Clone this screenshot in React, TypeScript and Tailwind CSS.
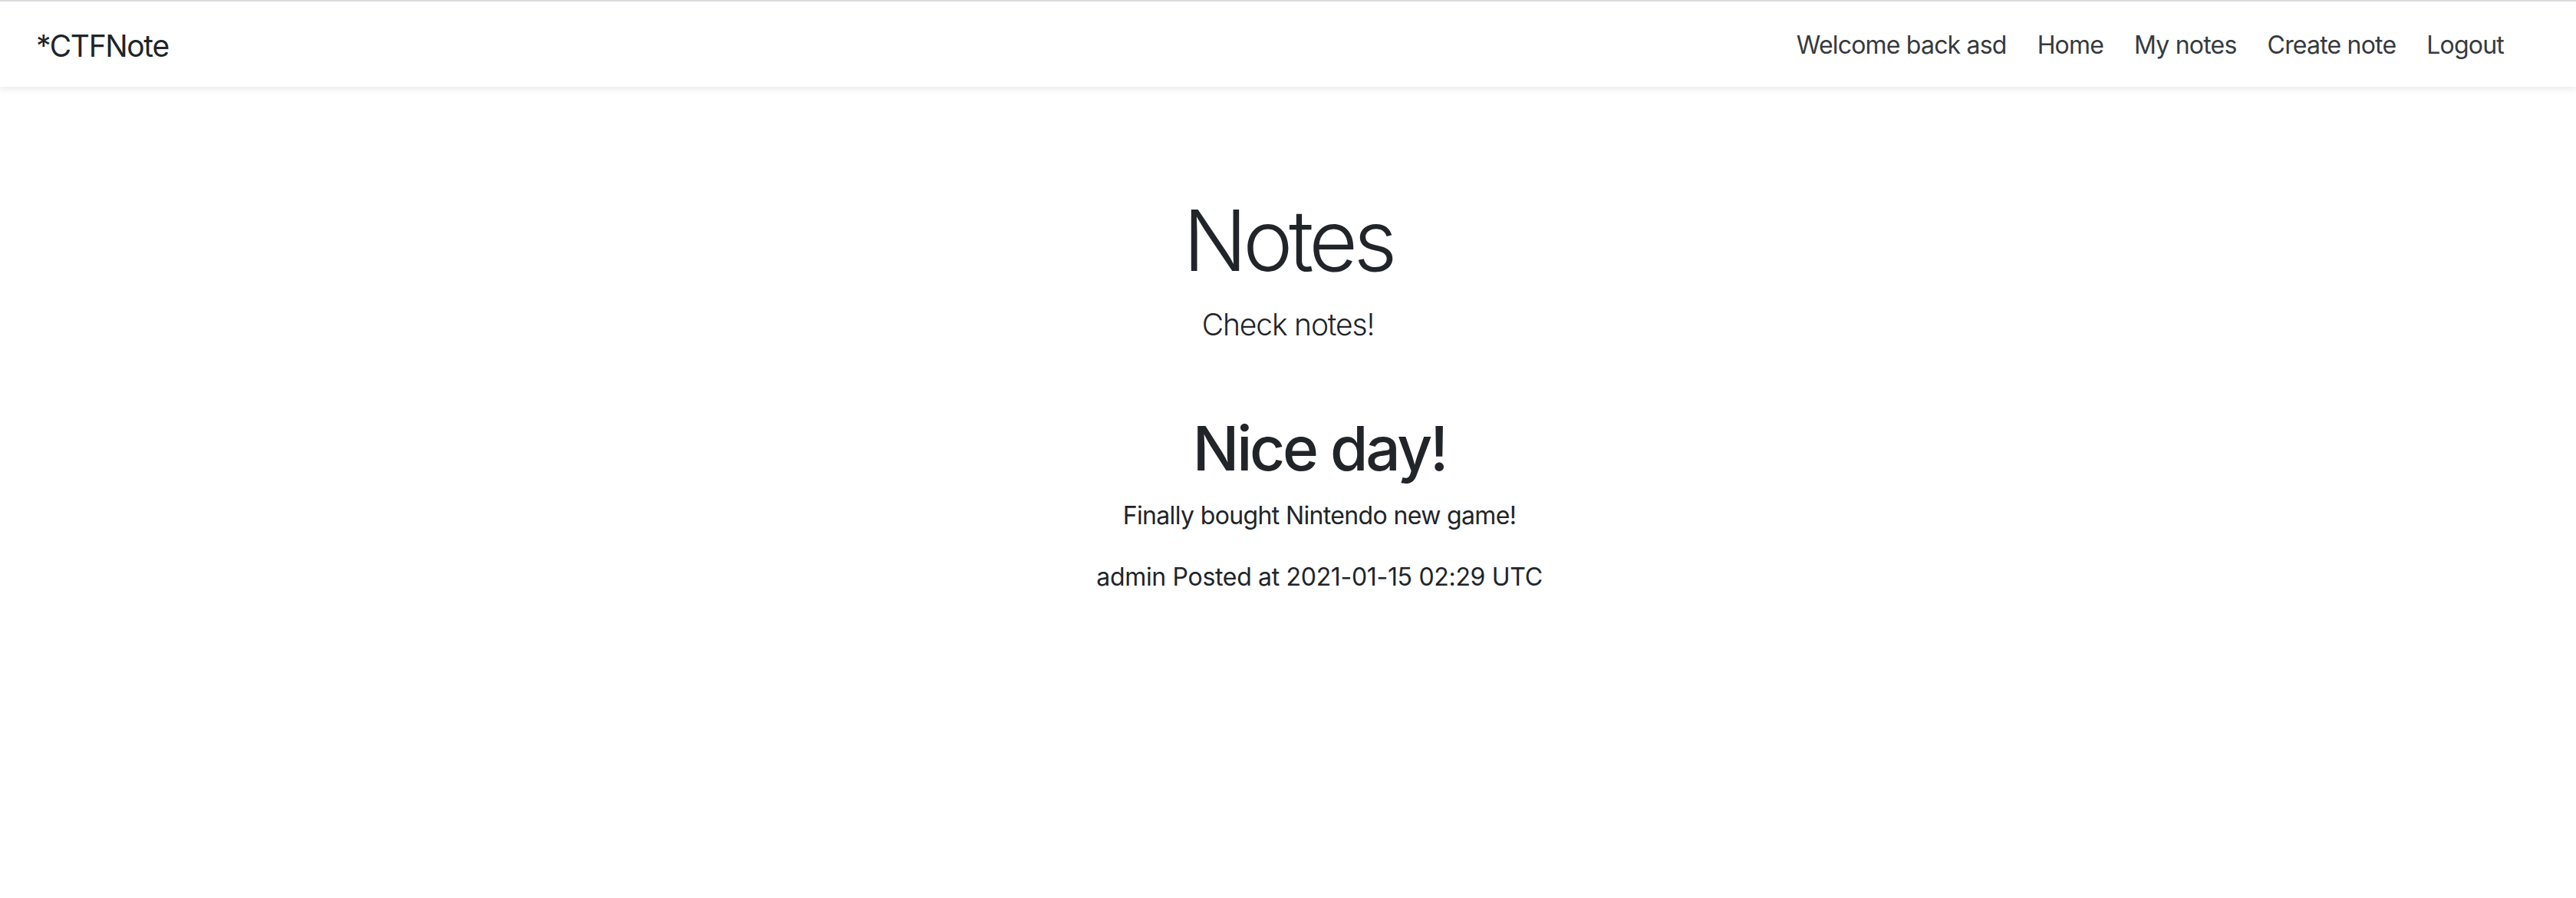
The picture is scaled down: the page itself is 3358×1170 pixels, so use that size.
import React from "react";

export default function App() {
  const links = ["Welcome back asd", "Home", "My notes", "Create note", "Logout"];

  return (
    <div className="min-h-[1170px] bg-white text-[#212529] font-['Inter','Liberation_Sans',sans-serif]">
      <nav className="h-[113px] border-t-2 border-[#dcdce0] bg-white shadow-[0_4px_8px_rgba(0,0,0,0.075)] flex items-center justify-between pl-[47px] pr-[74px] pt-[3px]">
        <a className="text-[39px] leading-none tracking-[-0.035em] text-[#212529]">*CTFNote</a>
        <ul className="flex items-center">
          {links.map((l) => (
            <li key={l} className="px-[20px] text-[32px] leading-none tracking-[-0.025em] text-[#373a3e]">
              {l}
            </li>
          ))}
        </ul>
      </nav>

      <main className="flex flex-col items-center text-center pt-[134px]">
        <h1 className="text-[110px] font-light leading-[1.2] tracking-[-0.05em] mb-[15px]">Notes</h1>
        <p className="text-[39px] font-light leading-[1.5] tracking-[-0.03em]">Check notes!</p>

        <div className="mt-[83px] ml-[82px] flex flex-col items-center">
          <h2 className="text-[80px] font-medium leading-[1.2] tracking-[-0.04em] mb-[16px]">Nice day!</h2>
          <p className="text-[32px] leading-[1.5] tracking-[-0.02em] mb-[32px]">Finally bought Nintendo new game!</p>
          <p className="text-[32px] leading-[1.5] tracking-[-0.01em]">admin Posted at 2021-01-15 02:29 UTC</p>
        </div>
      </main>
    </div>
  );
}
